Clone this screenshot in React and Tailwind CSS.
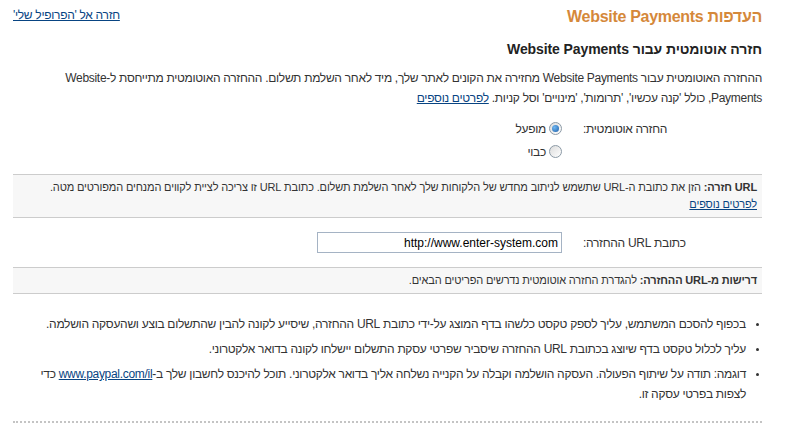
import React from "react";

function Radio({ checked }) {
  return (
    <span className="inline-flex h-[13px] w-[13px] items-center justify-center rounded-full border border-[#8c9aa6] bg-gradient-to-br from-[#dcdcdc] to-white">
      {checked && <span className="h-[7px] w-[7px] rounded-full bg-[radial-gradient(circle_at_35%_35%,#6fb7f2,#1d5fa8)]" />}
    </span>
  );
}

export default function App() {
  return (
    <div dir="rtl" className="min-h-[444px] bg-white font-['Liberation_Sans',Arial,sans-serif] text-[12px] tracking-[-0.3px] text-[#333]">
      <div className="ml-[13px] mr-[27px] pt-[7px]">
        {/* title row */}
        <div className="flex h-[20px] items-center justify-between">
          <h1 className="text-[16px] font-bold leading-[20px] text-[#d5883a]">העדפות Website Payments</h1>
          <a href="#" className="-mt-[4px] text-[12px] text-[#084482] underline">חזרה אל 'הפרופיל שלי'</a>
        </div>

        <h2 className="mt-[13px] text-[14px] font-bold leading-[18px] tracking-[-0.1px] text-[#222]">חזרה אוטומטית עבור Website Payments</h2>

        <p className="mt-[10px] leading-[20px]">
          ההחזרה האוטומטית עבור Website Payments מחזירה את הקונים לאתר שלך, מיד לאחר השלמת תשלום. ההחזרה האוטומטית מתייחסת ל-Website Payments, כולל 'קנה עכשיו', 'תרומות', 'מינויים' וסל קניות.{" "}
          <a href="#" className="text-[#084482] underline">לפרטים נוספים</a>
        </p>

        {/* auto return */}
        <div className="mt-[9px] grid grid-cols-[179px_1fr] gap-x-[21px]">
          <div className="flex h-[23px] items-center justify-end">החזרה אוטומטית:</div>
          <div className="flex flex-col">
            <label className="flex h-[23px] items-center gap-[3px]">
              <Radio checked />
              <span>מופעל</span>
            </label>
            <label className="flex h-[23px] items-center gap-[3px]">
              <Radio />
              <span>כבוי</span>
            </label>
          </div>
        </div>

        <div className="mt-[11px] border-y border-[#cccccc] bg-[#f7f7f7] px-[5px] py-[4px] text-[11px] leading-[17px] tracking-[-0.15px]">
          <b>URL חזרה:</b> הזן את כתובת ה-URL שתשמש לניתוב מחדש של הלקוחות שלך לאחר השלמת תשלום. כתובת URL זו צריכה לציית לקווים המנחים המפורטים מטה.
          <br />
          <a href="#" className="text-[#084482] underline">לפרטים נוספים</a>
        </div>

        {/* return url */}
        <div className="mt-[14px] grid grid-cols-[179px_1fr] gap-x-[21px]">
          <div className="flex h-[21px] items-center justify-end">כתובת URL ההחזרה:</div>
          <div>
            <input
              dir="ltr"
              readOnly
              value="http://www.enter-system.com"
              className="h-[21px] w-[245px] border border-[#a5b3c4] px-[3px] text-right text-[12px] tracking-normal text-black outline-none"
            />
          </div>
        </div>

        <div className="mt-[14px] border-y border-[#cccccc] bg-[#f7f7f7] px-[5px] py-[4px] text-[11px] leading-[17px] tracking-[-0.15px]">
          <b>דרישות מ-URL ההחזרה:</b> להגדרת החזרה אוטומטית נדרשים הפריטים הבאים.
        </div>

        <ul className="mt-[20px] flex list-disc flex-col gap-[5px] pr-[16px] leading-[20px] marker:text-[10px]">
          <li>בכפוף להסכם המשתמש, עליך לספק טקסט כלשהו בדף המוצג על-ידי כתובת URL ההחזרה, שיסייע לקונה להבין שהתשלום בוצע ושהעסקה הושלמה.</li>
          <li>עליך לכלול טקסט בדף שיוצג בכתובת URL ההחזרה שיסביר שפרטי עסקת התשלום יישלחו לקונה בדואר אלקטרוני.</li>
          <li>
            דוגמה: תודה על שיתוף הפעולה. העסקה הושלמה וקבלה על הקנייה נשלחה אליך בדואר אלקטרוני. תוכל להיכנס לחשבון שלך ב-
            <a href="#" className="text-[#084482] underline">www.paypal.com/il</a> כדי לצפות בפרטי עסקה זו.
          </li>
        </ul>

        <div className="mt-[17px] border-b-2 border-dotted border-[#c4c4c4]" />
      </div>
    </div>
  );
}
